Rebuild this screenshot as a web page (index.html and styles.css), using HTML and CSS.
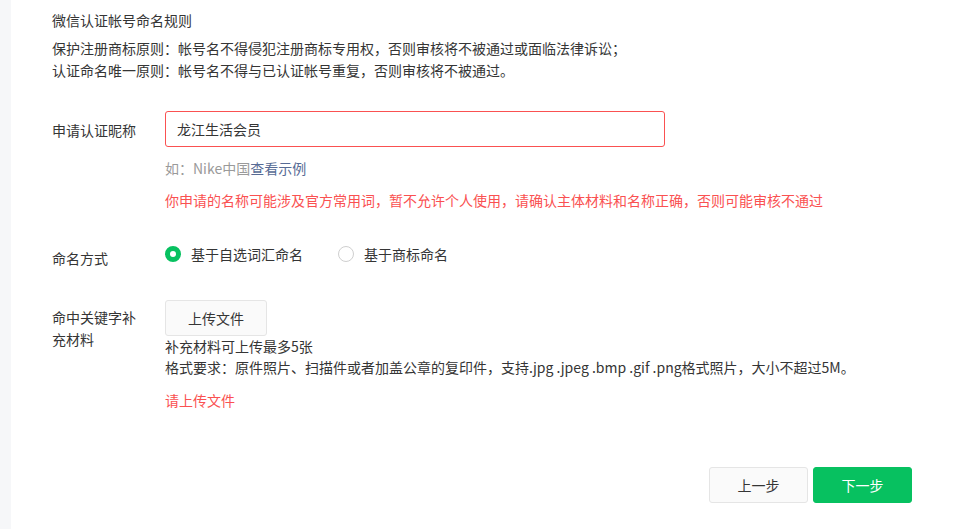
FILE: index.html
```html
<!DOCTYPE html>
<html lang="zh-CN">
<head>
<meta charset="utf-8">
<link rel="stylesheet" href="styles.css">
</head>
<body>
<div class="page">
  <aside class="side"></aside>
  <main class="main">
    <section class="rules">
      <h3 class="rules-title">微信认证帐号命名规则</h3>
      <p class="rules-line">保护注册商标原则：帐号名不得侵犯注册商标专用权，否则审核将不被通过或面临法律诉讼；</p>
      <p class="rules-line">认证命名唯一原则：帐号名不得与已认证帐号重复，否则审核将不被通过。</p>
    </section>

    <div class="form">
      <div class="row row-name">
        <label class="label label-name">申请认证昵称</label>
        <div class="field">
          <div class="input">龙江生活会员</div>
          <p class="hint">如：Nike中国<a class="link">查看示例</a></p>
          <p class="error">你申请的名称可能涉及官方常用词，暂不允许个人使用，请确认主体材料和名称正确，否则可能审核不通过</p>
        </div>
      </div>

      <div class="row row-mode">
        <label class="label label-mode">命名方式</label>
        <div class="field radios">
          <span class="radio-item"><i class="radio checked"></i>基于自选词汇命名</span>
          <span class="radio-item"><i class="radio"></i>基于商标命名</span>
        </div>
      </div>

      <div class="row row-upload">
        <label class="label label-upload">命中关键字补<br>充材料</label>
        <div class="field">
          <button class="btn-upload">上传文件</button>
          <p class="desc">补充材料可上传最多5张</p>
          <p class="desc">格式要求：原件照片、扫描件或者加盖公章的复印件，支持.jpg .jpeg .bmp .gif .png格式照片，大小不超过5M。</p>
          <p class="error error-upload">请上传文件</p>
        </div>
      </div>
    </div>

    <div class="footer">
      <button class="btn btn-default">上一步</button>
      <button class="btn btn-primary">下一步</button>
    </div>
  </main>
</div>
</body>
</html>
```

FILE: styles.css
```css
* { box-sizing: border-box; }
html, body {
  margin: 0;
  padding: 0;
  background: #fff;
}
body {
  font-family: "Microsoft YaHei", "Noto Sans CJK SC", "Noto Sans", sans-serif;
  font-size: 14px;
  color: #353535;
  width: 967px;
  height: 529px;
  overflow: hidden;
}
p { margin: 0; }
.page {
  display: flex;
  height: 529px;
}
.side {
  width: 11px;
  flex: none;
  background: #f6f7f9;
}
.main {
  flex: 1;
  padding: 9px 55px 0 41px;
}
.rules-title {
  margin: 0 0 6px;
  font-size: 14px;
  font-weight: normal;
  line-height: 22px;
}
.rules-line {
  line-height: 22px;
}
.form {
  margin-top: 30px;
}
.row {
  display: grid;
  grid-template-columns: 113px 1fr;
}
.label {
  line-height: 22px;
}
.label-name { padding-top: 8px; }
.label-mode { padding-top: 9px; }
.label-upload { padding-top: 6px; }
.input {
  width: 500px;
  height: 36px;
  border: 1px solid #fa5151;
  border-radius: 3px;
  padding: 0 11px;
  line-height: 34px;
  color: #353535;
}
.hint {
  margin-top: 10px;
  line-height: 22px;
  color: #9a9a9a;
}
.link {
  color: #576b95;
  text-decoration: none;
}
.error {
  margin-top: 10px;
  line-height: 22px;
  color: #fa5151;
}
.row-mode {
  margin-top: 27px;
}
.radios {
  display: flex;
  gap: 35px;
  line-height: 22px;
}
.radio-item {
  display: inline-flex;
  align-items: center;
}
.radio {
  width: 16px;
  height: 16px;
  border-radius: 50%;
  border: 1px solid #cfcfcf;
  margin-right: 10px;
  background: #fff;
}
.radio.checked {
  border: 5px solid #07c160;
}
.row-upload {
  margin-top: 31px;
}
.btn-upload {
  display: block;
  width: 102px;
  height: 36px;
  border: 1px solid #e5e5e5;
  border-radius: 3px;
  background: #fafafa;
  font: inherit;
  color: #353535;
  padding: 0;
}
.desc {
  line-height: 21px;
}
.error-upload {
  margin-top: 11px;
}
.footer {
  display: flex;
  justify-content: flex-end;
  gap: 5px;
  margin-top: 56px;
}
.btn {
  width: 99px;
  height: 36px;
  border-radius: 3px;
  font: inherit;
  padding: 0;
}
.btn-default {
  background: #fafafa;
  border: 1px solid #e5e5e5;
  color: #353535;
}
.btn-primary {
  background: #07c160;
  border: 1px solid #07c160;
  color: #fff;
}
```
